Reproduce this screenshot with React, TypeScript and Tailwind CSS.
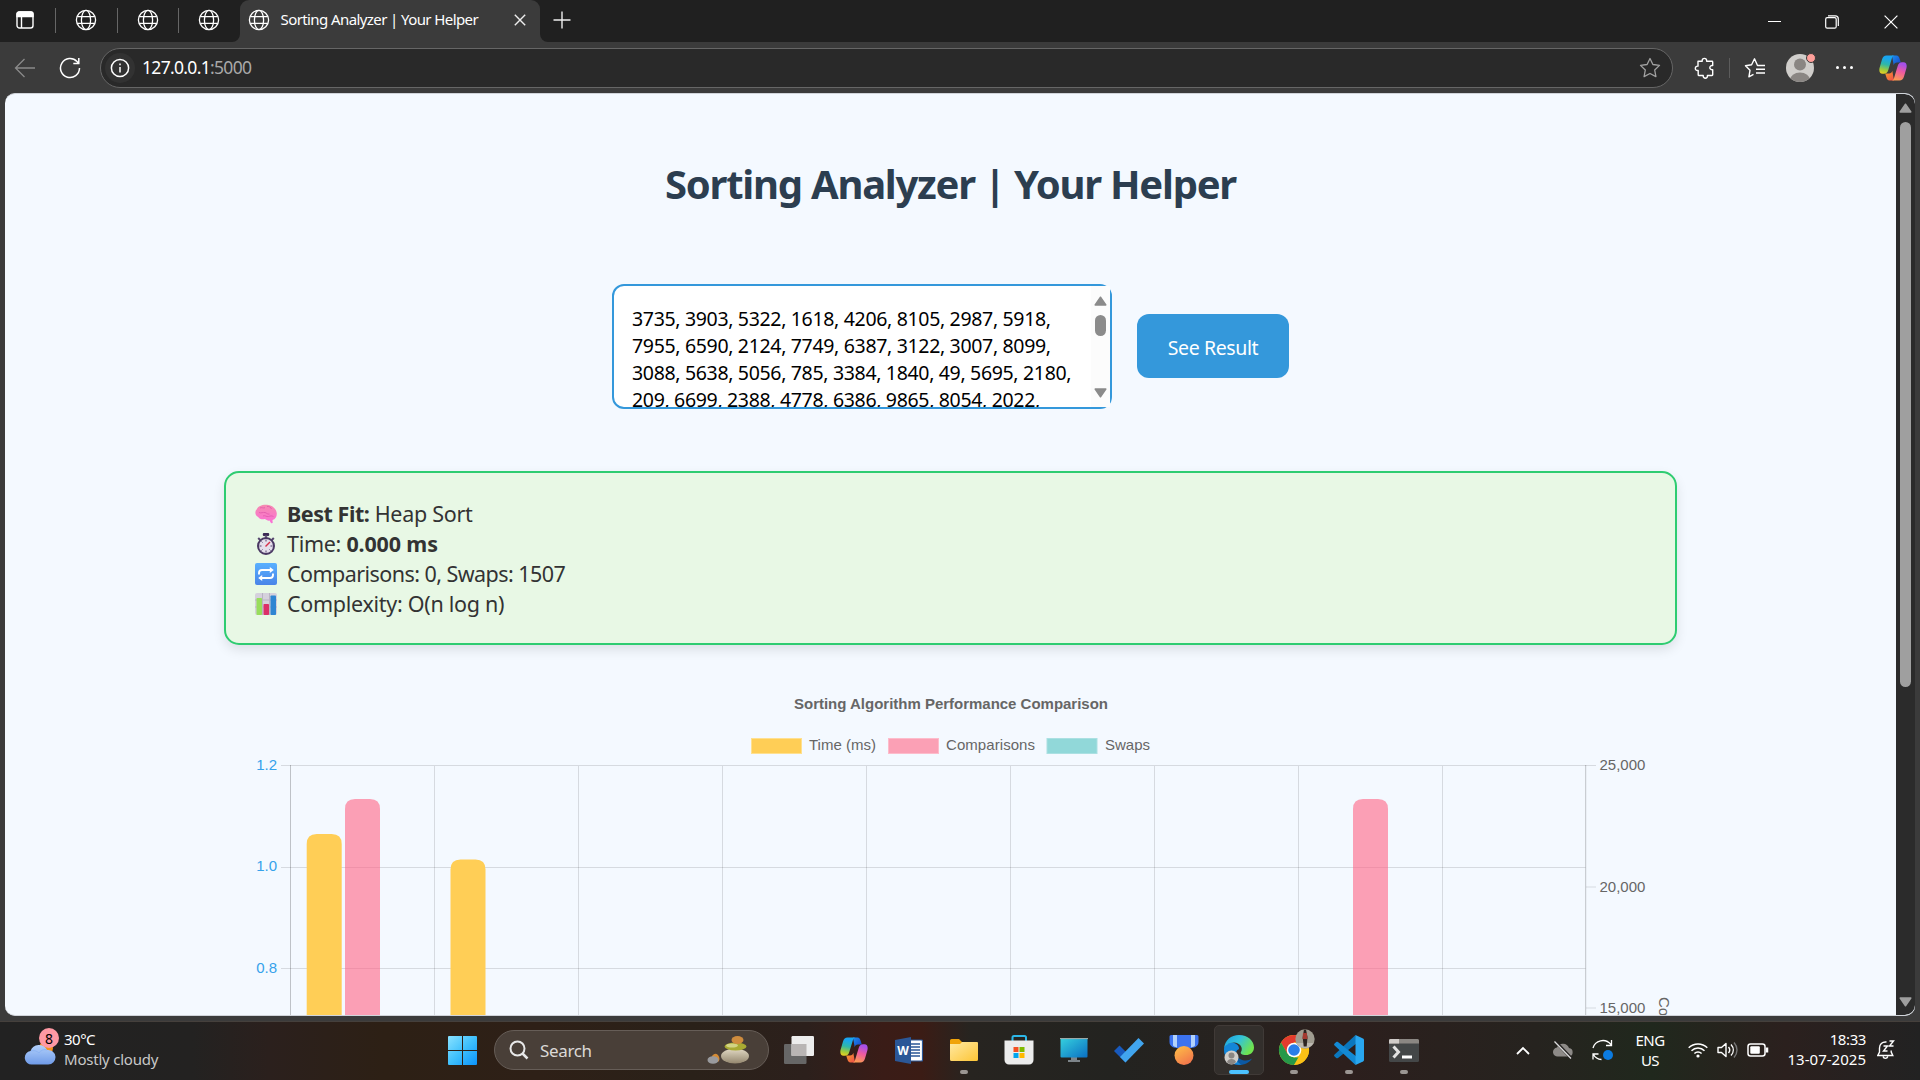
import type { ReactNode } from "react";

/* ---------- shared icons ---------- */

function Globe() {
  return (
    <svg width="22" height="22" viewBox="0 0 22 22" fill="none" stroke="#fff" strokeWidth="1.3">
      <circle cx="11" cy="11" r="9.6" />
      <ellipse cx="11" cy="11" rx="4.6" ry="9.6" />
      <path d="M2.2 7.6h17.6M2.2 14.4h17.6" />
    </svg>
  );
}

function Copilot({ id }: { id: string }) {
  return (
    <svg width="28" height="26" viewBox="0 0 28 26">
      <defs>
        <linearGradient id={id + "a"} x1="0.3" y1="0" x2="0.1" y2="1">
          <stop offset="0.1" stopColor="#19a5f0" />
          <stop offset="0.45" stopColor="#2fb7a8" />
          <stop offset="0.75" stopColor="#9fcb3c" />
          <stop offset="1" stopColor="#f5cf1d" />
        </linearGradient>
        <linearGradient id={id + "b"} x1="0.7" y1="0" x2="0.4" y2="1">
          <stop offset="0.1" stopColor="#a650e8" />
          <stop offset="0.5" stopColor="#ee5aa0" />
          <stop offset="1" stopColor="#fb9a52" />
        </linearGradient>
        <linearGradient id={id + "c"} x1="0" y1="0" x2="1" y2="1">
          <stop offset="0" stopColor="#1a8ff0" />
          <stop offset="1" stopColor="#1a3fc4" />
        </linearGradient>
        <linearGradient id={id + "d"} x1="0" y1="0" x2="1" y2="1">
          <stop offset="0" stopColor="#f8a42a" />
          <stop offset="1" stopColor="#ee4a4a" />
        </linearGradient>
      </defs>
      <path d="M13 .5h4.500c1.800 0 2.600 1.400 3.200 3.400l1.100 3.600H18c-2 0-2.800 1-3.300 2.700z" fill={"url(#" + id + "c)"} />
      <path d="M15 25.500h-4.500c-1.800 0-2.600-1.400-3.200-3.400l-1.100-3.600H10c2 0 2.800-1 3.300-2.700z" fill={"url(#" + id + "d)"} />
      <path d="M7.500.5h7.800c-1.200 0-1.900 1.200-2.500 3l-3.500 11.500c-.8 2.600-2 3.800-4.300 3.800H3.500C.7 18.800-.2 16 .6 12.800L3 4.500C3.800 1.800 5.200.5 7.500.5z" fill={"url(#" + id + "a)"} />
      <path d="M20.500 25.500h-7.800c1.200 0 1.900-1.200 2.500-3L18.700 11c.8-2.600 2-3.800 4.300-3.800h1.500c2.800 0 3.700 2.800 2.900 6L25 21.500c-.8 2.700-2.200 4-4.500 4z" fill={"url(#" + id + "b)"} />
    </svg>
  );
}

/* ---------- browser chrome ---------- */

function PinnedTab() {
  return (
    <div className="flex h-full w-[61.5px] items-center">
      <div className="h-[25px] w-px bg-[#666]" />
      <div className="ml-[19px]">
        <Globe />
      </div>
    </div>
  );
}

function TabStrip() {
  return (
    <div className="flex h-[42px] items-center bg-[#202020] pb-0.5 text-white">
      <div className="flex w-[55px] justify-center pr-[5px]">
        <svg width="18" height="18" viewBox="0 0 18 18" fill="none" stroke="#fff" strokeWidth="1.4">
          <rect x="1" y="1" width="16" height="16" rx="2.500" />
          <path d="M1 4V3a2 2 0 0 1 2-2h12a2 2 0 0 1 2 2v2.500H1z" fill="#fff" />
          <path d="M5.500 5v12" />
        </svg>
      </div>
      <PinnedTab />
      <PinnedTab />
      <PinnedTab />
      <div className="relative flex h-[42px] w-[300px] items-center self-start rounded-t-[9px] bg-[#3b3b3b] pb-0.5 pl-2">
        <svg className="absolute -left-2 bottom-0" width="8" height="8" viewBox="0 0 8 8">
          <path d="M8 0v8H0a8 8 0 0 0 8-8z" fill="#3b3b3b" />
        </svg>
        <svg className="absolute -right-2 bottom-0" width="8" height="8" viewBox="0 0 8 8">
          <path d="M0 0v8h8a8 8 0 0 1-8-8z" fill="#3b3b3b" />
        </svg>
        <Globe />
        <span className="ml-[11px] w-[233px] whitespace-nowrap pb-px text-[15px] tracking-[-0.59px]">
          Sorting Analyzer | Your Helper
        </span>
        <svg width="12" height="12" viewBox="0 0 12 12" stroke="#eee" strokeWidth="1.400">
          <path d="M.8.8l10.400 10.400M11.200.8L.8 11.200" />
        </svg>
      </div>
      <svg className="ml-[13px]" width="18" height="18" viewBox="0 0 18 18" stroke="#eee" strokeWidth="1.400">
        <path d="M9 .5v17M.5 9h17" />
      </svg>
      <div className="ml-auto flex items-center gap-[45px] pr-[22px] pt-[3px]">
        <svg className="mr-[-1px]" width="13" height="14" viewBox="0 0 13 14" stroke="#fff">
          <path d="M0 6.500h13" />
        </svg>
        <svg width="14" height="14" viewBox="0 0 14 14" fill="none" stroke="#fff" strokeWidth="1.200">
          <rect x=".7" y="2.700" width="10.500" height="10.500" rx="1.500" />
          <path d="M3 .9h7.300a3 3 0 0 1 3 3V11" />
        </svg>
        <svg width="14" height="14" viewBox="0 0 14 14" stroke="#fff" strokeWidth="1.200">
          <path d="M.6.6l12.800 12.800M13.400.6L.6 13.400" />
        </svg>
      </div>
    </div>
  );
}

function Toolbar() {
  return (
    <div className="flex h-[51px] items-center bg-[#3b3b3b]">
      <svg className="ml-[14px]" width="22" height="20" viewBox="0 0 22 20" fill="none" stroke="#8a8a8a" strokeWidth="1.300">
        <path d="M21 10H1.500M10.500 1L1.500 10l9 9" />
      </svg>
      <svg className="ml-[23px]" width="22" height="22" viewBox="0 0 22 22" fill="none" stroke="#fff" strokeWidth="1.500">
        <path d="M20.500 11A9.500 9.500 0 1 1 18 4.600l1.500 1.700M19.800 1v5.500h-5.500" />
      </svg>
      <div className="ml-[19px] flex h-10 w-[1573px] items-center rounded-full border-[1.5px] border-[#666] bg-[#292929] pl-1 pr-[11px]">
        <div className="flex h-[30px] w-[30px] items-center justify-center rounded-full bg-[#323232]">
          <svg width="20" height="20" viewBox="0 0 20 20" fill="none" stroke="#fff" strokeWidth="1.500">
            <circle cx="10" cy="10" r="8.600" />
            <path d="M10 9v5.500M10 5.500v1.700" />
          </svg>
        </div>
        <span className="ml-[7px] whitespace-nowrap text-[17.5px] tracking-[-0.68px] text-white">
          127.0.0.1<span className="text-[#a8a8a8]">:5000</span>
        </span>
        <svg className="ml-auto" width="22" height="22" viewBox="0 0 22 22" fill="none" stroke="#a2a2a2" strokeWidth="1.300" strokeLinejoin="round">
          <path d="M11 1.500l2.900 6 6.600.9-4.800 4.600 1.200 6.600L11 16.500l-5.900 3.100 1.200-6.600L1.500 8.400l6.600-.9z" />
        </svg>
      </div>
      <svg className="ml-[21px]" width="22" height="22" viewBox="0 0 22 22" fill="none" stroke="#fff" strokeWidth="1.400" strokeLinejoin="round">
        <path d="M4 4.200h4.200c-.6-3.800 5-3.800 4.400 0H18a.7.700 0 0 1 .7.700v3.700c-3.500-.8-4.200 4.400 0 4.200v5a.7.700 0 0 1-.7.700h-4.600c.6 3.600-4.600 3.600-4.200 0H5a.8.800 0 0 1-.8-.8v-4.200c-3.800.7-3.800-4.800-.2-4.400z" />
      </svg>
      <div className="ml-[13px] h-5 w-px bg-[#5c5c5c]" />
      <svg className="ml-[14px]" width="22" height="22" viewBox="0 0 22 22" fill="none" stroke="#fff" strokeWidth="1.400" strokeLinejoin="round">
        <path d="M21 8.500h-7.500L10.500 1.800l-2.900 6-6.100.9 4.500 4.600-1.100 6.600 4.600-2.500M12 12.300h9M12 16h9" />
      </svg>
      <div className="relative ml-[19px]">
        <svg width="30" height="30" viewBox="0 0 30 30">
          <clipPath id="avatar">
            <circle cx="15" cy="15" r="14" />
          </clipPath>
          <circle cx="15" cy="15" r="14" fill="#d0cecb" />
          <circle cx="15" cy="11.500" r="6" fill="#8a8683" />
          <ellipse cx="15" cy="27" rx="10" ry="7.500" fill="#8a8683" clipPath="url(#avatar)" />
        </svg>
        <span className="absolute -right-px top-0 h-[10px] w-[10px] rounded-full border border-[#3b3b3b] bg-[#ff9f9a]" />
      </div>
      <div className="ml-[21px] flex gap-1">
        <i className="h-[3px] w-[3px] rounded-full bg-white" />
        <i className="h-[3px] w-[3px] rounded-full bg-white" />
        <i className="h-[3px] w-[3px] rounded-full bg-white" />
      </div>
      <div className="ml-[26px]">
        <Copilot id="top" />
      </div>
    </div>
  );
}

/* ---------- page ---------- */

function Brain() {
  return (
    <svg width="22" height="20" viewBox="0 0 22 20">
      <defs>
        <linearGradient id="brain" x1="0" y1="0" x2="0" y2="1">
          <stop offset="0" stopColor="#f58bb0" />
          <stop offset="1" stopColor="#fb6fd6" />
        </linearGradient>
      </defs>
      <path d="M1.800 5.200C3.200 2 7.500.3 12 .8c5 .5 9.500 3.700 9.800 8.700.1 3.300-1.500 6-4.300 6.600l.2 3-1.600.2-1.600-2.700c-2 .2-3.300-.6-4.700-1.500-3 .6-5.600-.2-6.600-2.200C1.200 12.200.2 10.300.4 8.300.5 7 .9 6 1.800 5.200z" fill="url(#brain)" />
      <path d="M5 4c2-1 3 .5 5-.3M12 2.500c2.500-.3 4 1 4.500 2.500M4 8.500c2 1 4-.5 6 0s2 2 4.500 1.500M8 12c2-1 3.500 1 5.500.5s3-1 5 0" fill="none" stroke="#e057ab" strokeWidth=".8" />
    </svg>
  );
}

function Stopwatch() {
  return (
    <svg width="22" height="22" viewBox="0 0 22 22">
      <rect x="7.800" y="0" width="6.400" height="3" rx="1" fill="#3b2a55" />
      <rect x="9.800" y="2.500" width="2.400" height="2.500" fill="#6d6080" />
      <path d="M3.200 5l2 2M18.800 5l-2 2" stroke="#55456e" strokeWidth="2" />
      <circle cx="11" cy="13" r="8" fill="#e5e0ec" stroke="#4a3963" strokeWidth="2" />
      <g stroke="#55456e">
        <path d="M11 6.500v2M11 17.500v2M4.500 13h2M15.500 13h2M6.500 8.500l1 1M14.500 16.500l1 1M7.500 16.500l-1 1" />
      </g>
      <path d="M10.500 13.500L15 9" stroke="#d8304a" strokeWidth="1.500" />
    </svg>
  );
}

function Repeat() {
  return (
    <svg width="22" height="22" viewBox="0 0 22 22">
      <defs>
        <linearGradient id="repeat" x1="0" y1="0" x2="0" y2="1">
          <stop offset="0" stopColor="#58b0ff" />
          <stop offset="1" stopColor="#4a84e8" />
        </linearGradient>
      </defs>
      <rect width="22" height="22" rx="2" fill="url(#repeat)" />
      <path d="M4 11.500V10a3 3 0 0 1 3-3h9M18 10.500V12a3 3 0 0 1-3 3H6" fill="none" stroke="#fff" strokeWidth="1.900" />
      <path d="M14.800 4l4 3-4 3zM7.200 12l-4 3 4 3z" fill="#fff" />
    </svg>
  );
}

function BarChartEmoji() {
  return (
    <svg width="22" height="22" viewBox="0 0 22 22">
      <rect width="22" height="22" rx="2" fill="#d5d1dc" />
      <path d="M0 7h22M0 14h22M7.500 0v22M14.500 0v22" stroke="#b9b3c4" />
      <rect x="1.500" y="5" width="5.500" height="17" rx=".8" fill="#98dd5c" />
      <rect x="8.500" y="11" width="5.500" height="11" rx=".8" fill="#dc2f68" />
      <rect x="15.500" y="2.500" width="5.500" height="19.500" rx=".8" fill="#2f86d2" />
    </svg>
  );
}

function ResultLine({ icon, children }: { icon: ReactNode; children: ReactNode }) {
  return (
    <div className="flex h-[30px] items-center">
      <span className="flex w-8">{icon}</span>
      <span className="whitespace-pre">{children}</span>
    </div>
  );
}

function Chart() {
  const verticals = [1, 2, 3, 4, 5, 6, 7, 8].map((i) => 65.5 + i * 144);
  const bars = [
    { x: 81.700, y: 169, fill: "#ffce56" },
    { x: 120, y: 134, fill: "rgba(255,99,132,0.6)" },
    { x: 225.500, y: 194.500, fill: "#ffce56" },
    { x: 1128, y: 134, fill: "rgba(255,99,132,0.6)" },
  ];
  const legend = [
    { x: 526.500, tx: 584, w: 67, fill: "#ffce56", stroke: "#ffe08f", label: "Time (ms)" },
    { x: 663.500, tx: 721, w: 89, fill: "#fba0b5", stroke: "#fdbccb", label: "Comparisons" },
    { x: 822, tx: 880, w: 45, fill: "#91d8d9", stroke: "#abe0e2", label: "Swaps" },
  ];
  return (
    <svg className="mx-auto block shrink-0 font-['Liberation_Sans',Arial,sans-serif]" width="1452" height="351" viewBox="0 0 1452 351" fontSize="15" fill="#666">
      <text x="726" y="43.500" textAnchor="middle" fontWeight="700" textLength="314">
        Sorting Algorithm Performance Comparison
      </text>
      {legend.map((l) => (
        <g key={l.label}>
          <rect x={l.x} y="73.500" width="50" height="15" fill={l.fill} stroke={l.stroke} />
          <text x={l.tx} y="84.500" textLength={l.w}>
            {l.label}
          </text>
        </g>
      ))}
      <g stroke="#000" strokeOpacity=".12">
        <path d="M56 100.500h1315M56 202.500h1304.500M56 303.500h1304.500M1361 222h10M1361 343h10" />
        {verticals.map((x) => (
          <path key={x} d={"M" + x.toFixed(1) + " 101V351"} />
        ))}
      </g>
      <path d="M65.500 100V351M1360.700 100V351" stroke="#000" strokeOpacity=".22" />
      {bars.map((b) => (
        <path key={b.x} d={"M" + b.x + " 351V" + (b.y + 10) + "q0-10 10-10h15q10 0 10 10V351z"} fill={b.fill} />
      ))}
      <g fill="#36a2eb" textAnchor="end">
        <text x="52" y="105">1.2</text>
        <text x="52" y="206">1.0</text>
        <text x="52" y="308">0.8</text>
      </g>
      <text x="1374.500" y="105">25,000</text>
      <text x="1374.500" y="227">20,000</text>
      <text x="1374.500" y="348">15,000</text>
      <text transform="translate(1434 332) rotate(90)">Comparisons / Swaps</text>
    </svg>
  );
}

function Arrow({ down, fill }: { down?: boolean; fill: string }) {
  return (
    <svg className={down ? "rotate-180" : ""} width="13" height="10" viewBox="0 0 13 10">
      <path d="M6.500 1.200L11.800 9H1.200z" fill={fill} stroke={fill} strokeLinejoin="round" strokeWidth="1.500" />
    </svg>
  );
}

function Page() {
  return (
    <div className="flex h-[923px] overflow-hidden rounded-[10px] border-y border-[#d0d4da] bg-[#f4f9ff]">
      <main className="flex w-[1891px] flex-col overflow-hidden">
        <h1 className="mt-[62px] h-[56px] whitespace-nowrap text-center text-[40px] font-bold leading-[56px] tracking-[-1.25px] text-[#2c3e50]">
          Sorting Analyzer | Your Helper
        </h1>
        <div className="mt-[72px] flex items-center justify-center gap-[25px]">
          <div className="flex h-[125px] w-[500px] justify-between rounded-xl border-2 border-[#3498db] bg-white">
            <div className="h-[121px] overflow-hidden pl-[18px] pt-[19px] text-[19.5px] leading-[27px] tracking-[-0.33px] text-black">
              <p className="whitespace-nowrap">3735, 3903, 5322, 1618, 4206, 8105, 2987, 5918,</p>
              <p className="whitespace-nowrap">7955, 6590, 2124, 7749, 6387, 3122, 3007, 8099,</p>
              <p className="whitespace-nowrap">3088, 5638, 5056, 785, 3384, 1840, 49, 5695, 2180,</p>
              <p className="whitespace-nowrap">209, 6699, 2388, 4778, 6386, 9865, 8054, 2022,</p>
            </div>
            <div className="flex w-[19px] flex-col items-center bg-[#fcfcfc] pb-[9px] pt-[10px]">
              <Arrow fill="#8b8b8b" />
              <div className="mt-[9px] h-[21px] w-[11px] rounded-full bg-[#8b8b8b]" />
              <div className="mt-auto">
                <Arrow down fill="#8b8b8b" />
              </div>
            </div>
          </div>
          <button className="mb-0.5 h-16 w-[152px] whitespace-nowrap rounded-xl bg-[#3498db] pt-1 text-[19.5px] tracking-[-0.4px] text-white">
            See Result
          </button>
        </div>
        <section className="mx-auto mt-[62px] h-[174px] w-[1453px] shrink-0 rounded-[15px] border-2 border-[#2ecc71] bg-[#e8f8e5] pl-[29px] pt-[26px] text-[21.5px] leading-[30px] tracking-[-0.28px] text-[#333] shadow-[0_5px_12px_rgba(0,0,0,0.1)]">
          <ResultLine icon={<Brain />}>
            <b className="tracking-[-0.45px]">Best Fit:</b> Heap Sort
          </ResultLine>
          <ResultLine icon={<Stopwatch />}>
            Time: <b className="tracking-[-0.15px]">0.000 ms</b>
          </ResultLine>
          <ResultLine icon={<Repeat />}>
            <span className="tracking-[-0.55px]">Comparisons: 0, Swaps: 1507</span>
          </ResultLine>
          <ResultLine icon={<BarChartEmoji />}>Complexity: O(n log n)</ResultLine>
        </section>
        <div className="mt-[20px] flex">
          <Chart />
        </div>
      </main>
      <aside className="flex w-[19px] flex-col items-center rounded-r-[10px] bg-[#2b2b2b] pb-2 pt-[9px]">
        <Arrow fill="#9f9f9f" />
        <div className="mt-[9px] h-[565px] w-[11px] rounded-full bg-[#9f9f9f]" />
        <div className="mt-auto">
          <Arrow down fill="#9f9f9f" />
        </div>
      </aside>
    </div>
  );
}

/* ---------- taskbar ---------- */

function TaskItem({ children, dot, active }: { children: ReactNode; dot?: boolean; active?: boolean }) {
  return (
    <div className="flex w-[55px] justify-center">
      <div
        className={
          active
            ? "relative flex h-[50px] w-[50px] items-center justify-center rounded-[5px] border border-[#403a37] bg-[#332f2c]"
            : "relative flex h-[50px] w-[50px] items-center justify-center"
        }
      >
        {children}
        {dot && <span className="absolute bottom-px left-[21px] h-1 w-2 rounded-full bg-[#9b9693]" />}
        {active && <span className="absolute bottom-0 left-[14px] h-1 w-5 rounded-full bg-[#4cc2ff]" />}
      </div>
    </div>
  );
}

function Weather() {
  return (
    <div className="relative ml-6 h-[40px] w-[36px]">
      <svg className="absolute left-0 top-[9px]" width="32" height="28" viewBox="0 0 32 28">
        <defs>
          <linearGradient id="cloud" x1="0" y1="0" x2="0" y2="1">
            <stop offset="0" stopColor="#b3d1fb" />
            <stop offset="1" stopColor="#6f9be8" />
          </linearGradient>
        </defs>
        <circle cx="22" cy="9" r="7" fill="#f6931e" />
        <path d="M8 25.500a6.800 6.800 0 0 1-1.500-13.500A9 9 0 0 1 23 11a7.300 7.300 0 1 1 1 14.500z" fill="url(#cloud)" />
        <path d="M7 12c3-1 6 0 8 2 2-3 5-4 8-3" stroke="#8db4f3" fill="none" />
      </svg>
      <span className="absolute -top-0.5 left-[15px] flex h-5 w-5 items-center justify-center rounded-full bg-[#ff99a4] text-[14px] text-black">
        8
      </span>
    </div>
  );
}

function Taskbar() {
  return (
    <div className="h-[59px] border-t border-[#45403c] bg-[linear-gradient(90deg,#222_0%,#232221_10%,#2b201d_14%,#2d2015_20%,#2e2017_28%,#2a2119_36%,#2c201c_42%,#3a1c17_46%,#3b1c15_48%,#272420_50.5%,#232320_58%,#27221f_64%,#2c1f1d_70%,#26231f_80%,#20281d_86%,#2b201e_93%,#222_100%)] text-white">
      <div className="flex h-full items-center pb-0.5">
        <Weather />
        <div className="ml-1 w-[371px] whitespace-nowrap pb-[3px] text-[15px] leading-5">
          <p className="tracking-[-0.5px]">30°C</p>
          <p className="tracking-[-0.22px] text-[#c8c8c8]">Mostly cloudy</p>
        </div>
        <TaskItem>
          <svg width="29" height="29" viewBox="0 0 29 29">
            <defs>
              <linearGradient id="win" x1="0" y1="0" x2="1" y2="1">
                <stop offset="0" stopColor="#8ae2ff" />
                <stop offset=".5" stopColor="#3fc0fc" />
                <stop offset="1" stopColor="#0b93fb" />
              </linearGradient>
            </defs>
            <path d="M1 0h13v14H0V1a1 1 0 0 1 1-1zM15 0h13a1 1 0 0 1 1 1v13H15zM0 15h14v14H1a1 1 0 0 1-1-1zM15 15h14v13a1 1 0 0 1-1 1H15z" fill="url(#win)" />
          </svg>
        </TaskItem>
        <div className="ml-1 mr-0.5 flex h-10 w-[275px] items-center rounded-full border border-[#665d57] bg-[#493f38] pl-[14px] pr-[19px]">
          <svg width="20" height="20" viewBox="0 0 20 20" fill="none" stroke="#e8e8e8" strokeWidth="2">
            <circle cx="8.500" cy="8.500" r="7" />
            <path d="M13.500 13.500l5 5" strokeWidth="2.500" />
          </svg>
          <span className="ml-[11px] pt-0.5 text-[17px] tracking-[-0.35px] text-[#dcd9d7]">Search</span>
          <svg className="ml-auto" width="42" height="28" viewBox="0 0 42 28">
            <defs>
              <linearGradient id="stone" x1="0" y1="0" x2="0" y2="1">
                <stop offset="0" stopColor="#e2d9c4" />
                <stop offset="1" stopColor="#94876f" />
              </linearGradient>
            </defs>
            <path d="M3 25c2-7 5-9 8-6 2 3 2 5 0 7z" fill="#d58b35" />
            <ellipse cx="6" cy="24" rx="5.500" ry="3.800" fill="#999a9e" />
            <ellipse cx="28" cy="20" rx="14" ry="7.500" fill="url(#stone)" />
            <ellipse cx="28.500" cy="10.500" rx="11" ry="4" fill="#a8aa32" />
            <ellipse cx="25" cy="9.500" rx="6" ry="2" fill="#d2d384" />
            <ellipse cx="30.500" cy="4" rx="6" ry="4" fill="#cf8c3e" />
          </svg>
        </div>
        <TaskItem>
          <svg width="30" height="28" viewBox="0 0 30 28">
            <rect x="0" y="8" width="22.500" height="20" rx="1.200" fill="#666" />
            <rect x="7.500" y="0" width="22.500" height="20" rx="1.200" fill="#ededed" />
            <rect x="7.500" y="8" width="15" height="12" fill="#b9b5b4" />
          </svg>
        </TaskItem>
        <TaskItem>
          <Copilot id="task" />
        </TaskItem>
        <TaskItem>
          <svg width="28" height="27" viewBox="0 0 28 27">
            <rect x="12" y="3" width="15.500" height="21" rx="1" fill="#fff" stroke="#2b5797" strokeWidth="1.200" />
            <path d="M16 7h9M16 10h9M16 13h9M16 16h9M16 19h9" stroke="#2b5797" strokeWidth="1.300" />
            <path d="M0 3l16-3v27L0 24z" fill="#2b5797" />
            <text x="8" y="18" textAnchor="middle" fontSize="12" fontWeight="700" fill="#fff">W</text>
          </svg>
        </TaskItem>
        <TaskItem dot>
          <svg width="28" height="22" viewBox="0 0 28 22">
            <defs>
              <linearGradient id="folder" x1="0" y1="0" x2="1" y2="1">
                <stop offset="0" stopColor="#ffe9a3" />
                <stop offset="1" stopColor="#fdc535" />
              </linearGradient>
            </defs>
            <path d="M0 7V1.500A1.500 1.500 0 0 1 1.500 0H9l3 3h12v4z" fill="#f0a30a" />
            <path d="M0 5h10l2-2h15a1 1 0 0 1 1 1v16.500a1.500 1.500 0 0 1-1.500 1.500h-25A1.500 1.500 0 0 1 0 20.500z" fill="url(#folder)" />
          </svg>
        </TaskItem>
        <TaskItem>
          <svg width="30" height="30" viewBox="0 0 30 30">
            <path d="M8.500 6V2.500A1.500 1.500 0 0 1 10 1h10.500A1.500 1.500 0 0 1 22 2.500V6" fill="none" stroke="#2cb7e8" strokeWidth="2" />
            <path d="M.5 5.500h29V25a4.500 4.500 0 0 1-4.500 4.500H5A4.500 4.500 0 0 1 .5 25z" fill="#ececec" />
            <rect x="9.500" y="12" width="5" height="5" fill="#f25022" />
            <rect x="15.500" y="12" width="5" height="5" fill="#7fba00" />
            <rect x="9.500" y="18" width="5" height="5" fill="#00a4ef" />
            <rect x="15.500" y="18" width="5" height="5" fill="#ffb900" />
          </svg>
        </TaskItem>
        <TaskItem>
          <svg width="28" height="24" viewBox="0 0 28 24">
            <defs>
              <linearGradient id="pc" x1="0" y1="0" x2="1" y2="1">
                <stop offset="0" stopColor="#35d0de" />
                <stop offset="1" stopColor="#0b6fc2" />
              </linearGradient>
            </defs>
            <path d="M11 19h6v3h3v2H8v-2h3z" fill="#7d8489" />
            <rect x=".5" y=".5" width="27" height="19" rx="1" fill="url(#pc)" />
            <path d="M0 .5h28" stroke="#9aa" strokeWidth="1.200" />
          </svg>
        </TaskItem>
        <TaskItem>
          <svg width="30" height="25" viewBox="0 0 30 25">
            <path d="M0 13l5.500-5.500 10 10-4 7z" fill="#185abd" />
            <path d="M24.500 0L30 5.500 11.500 24.500 6 19z" fill="#41a5ee" />
          </svg>
        </TaskItem>
        <TaskItem>
          <svg width="30" height="30" viewBox="0 0 30 30">
            <defs>
              <linearGradient id="medal" x1="0" y1="0" x2=".6" y2="1">
                <stop offset="0" stopColor="#ffc247" />
                <stop offset="1" stopColor="#f2774b" />
              </linearGradient>
            </defs>
            <path d="M.5 1.500A1.500 1.500 0 0 1 2 0h26a1.500 1.500 0 0 1 1.500 1.500V7c0 5-5 6-9 6h-11c-4 0-9-1-9-6z" fill="#3c73f0" />
            <path d="M4 0h4v12.500c-2-.5-3-1-4-2zM22 0h4v10.500c-1 1-2 1.500-4 2z" fill="#b3d2fb" />
            <circle cx="15" cy="20.500" r="9.500" fill="url(#medal)" />
          </svg>
        </TaskItem>
        <TaskItem active>
          <svg width="30" height="30" viewBox="0 0 30 30">
            <defs>
              <linearGradient id="edgeTop" x1="0" y1="0" x2="1" y2=".5">
                <stop offset="0" stopColor="#1c9fe0" />
                <stop offset=".5" stopColor="#32c2dc" />
                <stop offset="1" stopColor="#6fe34f" />
              </linearGradient>
            </defs>
            <path d="M0 14c1-5 6-7 10-6 3 1 5 3 5 6-3 1-5 7 1 10 5 2.500 9 1.500 12-.5C25.500 27.500 21 30 15 30 6 30 0 23 0 14z" fill="#0c59a4" />
            <path d="M0 14c1-5 6-7 10-6 3 1 5 3 5 6-3 1-4 4-4 6 0 4 2 7 6 9.500C6 31 0 23 0 14z" fill="#1386d8" />
            <path d="M0 13.500C1 5 7 0 15 0c9 0 15 6 15 12.500 0 5-4 7.500-8 7.500-4.500 0-6-1.500-5-3 2.500-4-1-9.500-7-9.500-5 0-9 3-10 6z" fill="url(#edgeTop)" />
            <circle cx="7.500" cy="22.500" r="7" fill="#d0cecb" />
            <circle cx="7.500" cy="20.500" r="3" fill="#8a8683" />
            <path d="M3 27c1-4 8-4 9 0-2 3-7 3-9 0z" fill="#8a8683" />
          </svg>
        </TaskItem>
        <TaskItem dot>
          <svg className="overflow-visible" width="30" height="30" viewBox="0 0 30 30">
            <circle cx="15" cy="15" r="15" fill="#fbc116" />
            <path d="M2 7.500A15 15 0 0 1 28 7.500H15L8.500 19z" fill="#e33b2e" />
            <path d="M2 7.500L8.500 18.700 15 22.500h6.500L15 30A15 15 0 0 1 2 7.500z" fill="#269949" />
            <path d="M15 7.500h13A15 15 0 0 1 15 30l6.500-11.300z" fill="#fbc116" />
            <circle cx="15" cy="15" r="7.300" fill="#fff" />
            <circle cx="15" cy="15" r="5.800" fill="#2a7de9" />
            <circle cx="26" cy="4" r="9.700" fill="#a09c90" />
            <path d="M17.500 8h17a9.700 9.700 0 0 1-17 0z" fill="#bcb8b0" />
            <path d="M24.700-4c0-2 2.600-2 2.600 0l1.200 6-.8 9.500h-3l-1-9z" fill="#2c2421" />
            <path d="M24-2h3.800l.7 6h-5z" fill="#a33a30" />
          </svg>
        </TaskItem>
        <TaskItem dot>
          <svg width="30" height="30" viewBox="0 0 30 30">
            <path d="M21.500 0L23 8 4 23c-.7.5-1.300.4-1.800 0L.6 21.500c-.7-.7-.7-1.500 0-2.100z" fill="#0b77bd" />
            <path d="M21.500 30L23 22 4 7c-.7-.5-1.300-.4-1.800 0L.6 8.500c-.7.700-.7 1.500 0 2.100z" fill="#1389d4" />
            <path d="M21.500 0v30L29 26.500a1.800 1.800 0 0 0 1-1.500V5a1.800 1.800 0 0 0-1-1.500z" fill="#29a7f0" />
          </svg>
        </TaskItem>
        <TaskItem dot>
          <svg width="30" height="23" viewBox="0 0 30 23">
            <rect width="30" height="23" rx="1.500" fill="#444748" />
            <path d="M0 4.500V1.500A1.500 1.500 0 0 1 1.500 0h27A1.500 1.500 0 0 1 30 1.500v3z" fill="#8b8783" />
            <path d="M0 4.500V1.500A1.500 1.500 0 0 1 1.500 0H10v4.500z" fill="#cfcbc8" />
            <path d="M4.500 7.500l5 5.500-5 5.500" fill="none" stroke="#e2e2e2" strokeWidth="3" />
            <rect x="13" y="16.500" width="10" height="3" fill="#fff" />
          </svg>
        </TaskItem>
        <div className="ml-[85px] flex items-center">
          <svg width="14" height="9" viewBox="0 0 14 9" fill="none" stroke="#fff" strokeWidth="1.800">
            <path d="M1 8l6-6 6 6" />
          </svg>
          <svg className="ml-[22px]" width="22" height="18" viewBox="0 0 22 18">
            <path d="M6 15.500a4.500 4.500 0 0 1-1-9A6.500 6.500 0 0 1 17 7a4.300 4.300 0 0 1 0 8.500z" fill="#8d8a87" />
            <path d="M3.500.5l16 17" stroke="#242220" strokeWidth="3" />
            <path d="M2.500.5l16.500 17" stroke="#ddd" strokeWidth="1.300" />
          </svg>
          <svg className="ml-[18px]" width="22" height="22" viewBox="0 0 22 22" fill="none" stroke="#fff" strokeWidth="1.300">
            <path d="M1 9C3 1.500 13-1.500 19 5.500M19.500 1v5.500H14M1 20.500V15h5.500M1.500 15.500c1.500 3 4.500 4.800 8 5" />
            <circle cx="16" cy="16" r="5" fill="#0c7be0" stroke="none" />
          </svg>
          <div className="ml-[18px] w-[36px] whitespace-nowrap text-center text-[15px] leading-5 tracking-[-0.5px]">
            <p>ENG</p>
            <p>US</p>
          </div>
          <svg className="ml-[20px]" width="20" height="16" viewBox="0 0 20 16" fill="none" stroke="#fff" strokeWidth="1.500">
            <path d="M.7 5.800a13 13 0 0 1 18.600 0M3.500 8.800a9 9 0 0 1 13 0M6.400 11.600a5 5 0 0 1 7.200 0" />
            <circle cx="10" cy="14" r="1.600" fill="#fff" stroke="none" />
          </svg>
          <svg className="ml-[9px]" width="22" height="18" viewBox="0 0 22 18" fill="none" stroke="#fff" strokeWidth="1.400" strokeLinejoin="round">
            <path d="M1 6.500v5h3.500l4.500 4v-13l-4.500 4zM11.500 6c1.500 1.800 1.500 4.200 0 6M14 3.500c3 3.300 3 7.700 0 11" />
            <path d="M17 1.500c4 4.500 4 10.500 0 15" stroke="#777" />
          </svg>
          <svg className="ml-[8px]" width="22" height="14" viewBox="0 0 22 14" fill="none" stroke="#fff" strokeWidth="1.500">
            <rect x="1" y="1" width="17" height="12" rx="2.500" />
            <rect x="3.300" y="3.300" width="9.500" height="7.400" rx="1" fill="#fff" stroke="none" />
            <path d="M20 4.500v5" strokeWidth="2.500" />
          </svg>
          <div className="ml-[14px] w-[83px] whitespace-nowrap pb-[3px] text-right text-[15px] leading-5">
            <p className="tracking-[-0.4px]">18:33</p>
            <p className="tracking-[0.02px]">13-07-2025</p>
          </div>
          <svg className="ml-[11px]" width="18" height="20" viewBox="0 0 18 20" fill="none" stroke="#fff" strokeWidth="1.400">
            <path d="M9.500 2C5 1.500 2.500 4.500 2.500 8v4L.8 15.500h15l-1.600-3.500v-1.500M6 16.500c.8 2.500 4 2.500 4.800 0M6.500 6h4l-4 5h4M12.500 1h4l-4 5h4" />
          </svg>
        </div>
      </div>
    </div>
  );
}

export default function App() {
  return (
    <div className="flex h-[1080px] w-[1920px] flex-col overflow-hidden bg-[#3b3b3b] font-['Noto_Sans','Open_Sans',sans-serif]">
      <TabStrip />
      <Toolbar />
      <div className="h-[928px] px-[5px]">
        <Page />
      </div>
      <Taskbar />
    </div>
  );
}
